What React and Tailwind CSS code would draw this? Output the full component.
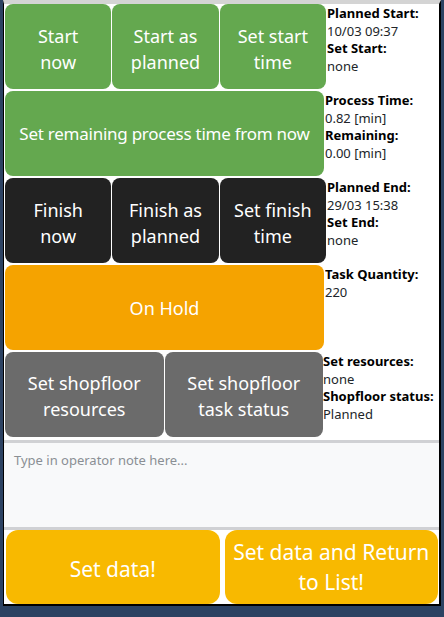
import React from 'react';

const font = { fontFamily: '"Noto Sans", "Open Sans", sans-serif' };

function Btn({ children, className = '' }) {
  return (
    <button className={`flex-1 min-w-0 h-full rounded-lg text-white leading-[26px] text-center ${className}`}>
      {children}
    </button>
  );
}

function Info({ items }) {
  return (
    <div className="flex-1 pt-px text-[13px] leading-[17.5px] text-[#212529] overflow-hidden whitespace-nowrap">
      {items.map(([label, value]) => (
        <div key={label}>
          <div className="font-bold text-black">{label}</div>
          <div>{value}</div>
        </div>
      ))}
    </div>
  );
}

export default function App() {
  return (
    <div className="bg-[#2c4262] w-[444px] h-[617px] pl-[3px]" style={font}>
      <div className="w-[438px] bg-white border-t-4 border-t-[#d4d4d4] border-l border-r-2 border-b-2 border-black flex flex-col">
        <div className="flex flex-col gap-[2px] pl-px">
          <div className="flex h-[85px] gap-px">
            <div className="w-[321px] flex gap-px">
              <Btn className="bg-[#64a84f] pt-[5px] text-[18px]">Start<br />now</Btn>
              <Btn className="bg-[#64a84f] pt-[5px] text-[18px]">Start as<br />planned</Btn>
              <Btn className="bg-[#64a84f] pt-[5px] text-[18px]">Set start<br />time</Btn>
            </div>
            <Info items={[['Planned Start:', '10/03 09:37'], ['Set Start:', 'none']]} />
          </div>

          <div className="flex h-[85px] gap-px">
            <div className="w-[319px] flex">
              <Btn className="bg-[#64a84f] whitespace-nowrap text-[17px] tracking-[-0.25px]">
                Set remaining process time from now
              </Btn>
            </div>
            <Info items={[['Process Time:', '0.82 [min]'], ['Remaining:', '0.00 [min]']]} />
          </div>

          <div className="flex h-[85px] gap-px">
            <div className="w-[321px] flex gap-px">
              <Btn className="bg-[#222222] pt-[5px] text-[18px]">Finish<br />now</Btn>
              <Btn className="bg-[#222222] pt-[5px] text-[18px]">Finish as<br />planned</Btn>
              <Btn className="bg-[#222222] pt-[5px] text-[18px]">Set finish<br />time</Btn>
            </div>
            <Info items={[['Planned End:', '29/03 15:38'], ['Set End:', 'none']]} />
          </div>

          <div className="flex h-[85px] gap-px">
            <div className="w-[319px] flex">
              <Btn className="bg-[#f5a300] text-[18px]">On Hold</Btn>
            </div>
            <Info items={[['Task Quantity:', '220']]} />
          </div>

          <div className="flex h-[85px]">
            <div className="w-[318px] flex gap-px">
              <Btn className="bg-[#6b6b6b] pt-[3px] text-[18px]">Set shopfloor<br />resources</Btn>
              <Btn className="bg-[#6b6b6b] pt-[3px] text-[18px]">Set shopfloor<br />task status</Btn>
            </div>
            <Info items={[['Set resources:', 'none'], ['Shopfloor status:', 'Planned']]} />
          </div>
        </div>

        <textarea
          className="mt-[3px] h-[90px] w-full resize-none bg-[#f8f9fa] border-y-[3px] border-t-[#d0d1d4] border-b-[#d0d1d4] px-[10px] py-[8px] text-[13px] leading-[18px] text-[#212529] placeholder:text-[#8a8f94] outline-none"
          placeholder="Type in operator note here..."
        />

        <div className="flex gap-[5px] pl-[2px] pr-px h-[74px]">
          <button className="flex-1 min-w-0 rounded-xl bg-[#f8b900] text-white text-[21px] leading-[30px] pt-[3px]">
            Set data!
          </button>
          <button className="flex-1 min-w-0 rounded-xl bg-[#f8b900] text-white text-[21px] leading-[30px]">
            Set data and Return<br />to List!
          </button>
        </div>
      </div>
    </div>
  );
}
